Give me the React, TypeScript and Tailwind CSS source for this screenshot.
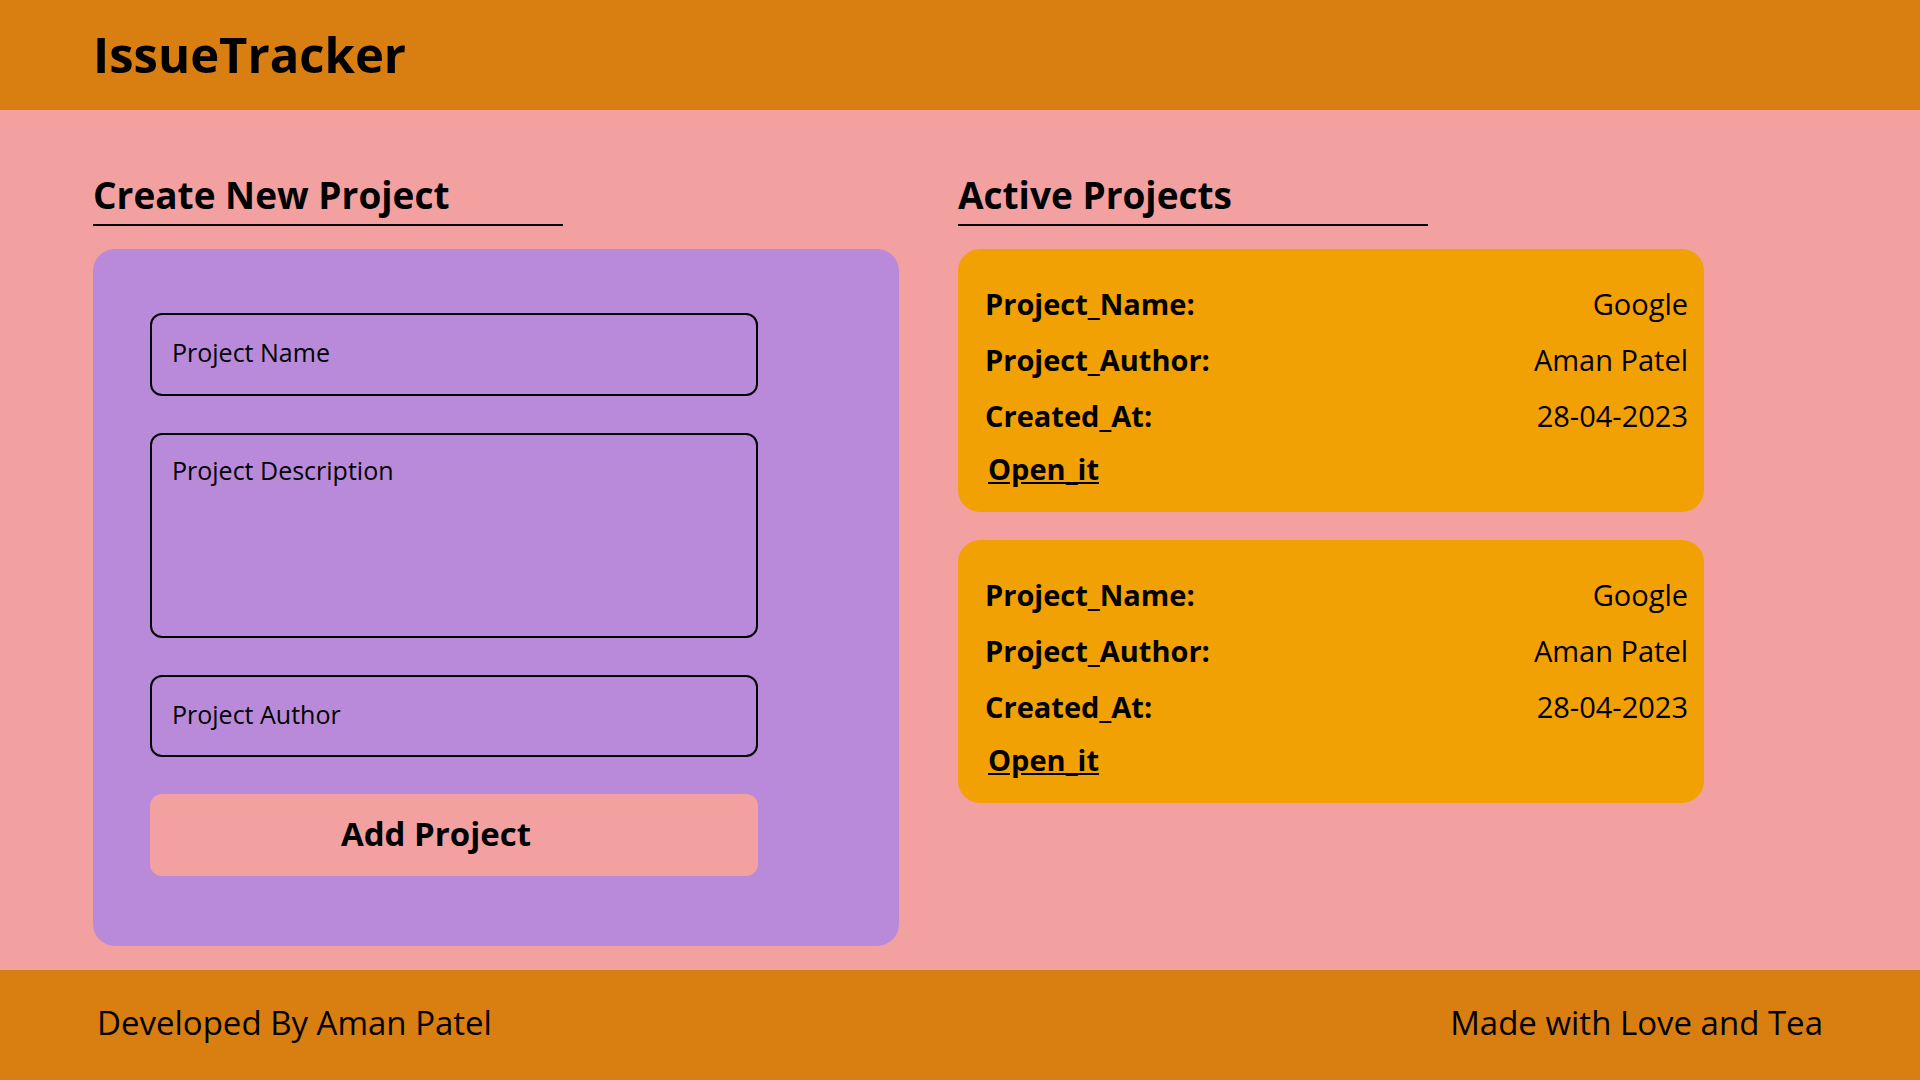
const projects = [
  { name: "Google", author: "Aman Patel", createdAt: "28-04-2023" },
  { name: "Google", author: "Aman Patel", createdAt: "28-04-2023" },
]

function SectionTitle({ title }: { title: string }) {
  return (
    <div className="w-[470px] border-b-2 border-black pb-[6px]">
      <h2 className="text-[37px] font-bold leading-[46px]">{title}</h2>
    </div>
  )
}

function ProjectCard({ name, author, createdAt }: { name: string; author: string; createdAt: string }) {
  return (
    <div className="w-[746px] rounded-[22px] bg-[#f2a104] pl-[27px] pr-[16px] pt-[27px] pb-[15px] text-[29px] leading-[56px]">
      <div className="flex justify-between">
        <span className="font-bold">Project_Name:</span>
        <span>{name}</span>
      </div>
      <div className="flex justify-between">
        <span className="font-bold">Project_Author:</span>
        <span>{author}</span>
      </div>
      <div className="flex justify-between">
        <span className="font-bold">Created_At:</span>
        <span>{createdAt}</span>
      </div>
      <div className="-mt-[3px]">
        <a href="#" className="ml-[3px] font-bold underline">
          Open_it
        </a>
      </div>
    </div>
  )
}

export default function App() {
  return (
    <div className="flex h-screen flex-col bg-[#f3a0a1] text-black" style={{ fontFamily: '"Open Sans", "Noto Sans", sans-serif' }}>
      <header className="flex h-[110px] shrink-0 items-center bg-[#d97e10] px-[93px]">
        <h1 className="text-[49px] font-bold">IssueTracker</h1>
      </header>

      <main className="flex flex-1 gap-[59px] px-[93px] pt-[62px]">
        <section className="w-[806px]">
          <SectionTitle title="Create New Project" />
          <form className="mt-[23px] flex flex-col gap-[37px] rounded-[22px] bg-[#ba8ada] pl-[57px] pt-[64px] pb-[70px]">
            <input
              type="text"
              placeholder="Project Name"
              className="h-[83px] w-[608px] rounded-[12px] border-2 border-black bg-transparent pl-[20px] pb-[5px] text-[25px] outline-none placeholder:text-black"
            />
            <textarea
              placeholder="Project Description"
              className="h-[205px] w-[608px] resize-none rounded-[12px] border-2 border-black bg-transparent pl-[20px] pt-[17px] text-[25px] outline-none placeholder:text-black"
            />
            <input
              type="text"
              placeholder="Project Author"
              className="h-[82px] w-[608px] rounded-[12px] border-2 border-black bg-transparent pl-[20px] pb-[5px] text-[25px] outline-none placeholder:text-black"
            />
            <button type="button" className="h-[82px] w-[608px] rounded-[12px] bg-[#f3a0a1] pr-[36px] pb-[2px] text-[33px] font-bold">
              Add Project
            </button>
          </form>
        </section>

        <section className="w-[746px]">
          <SectionTitle title="Active Projects" />
          <div className="mt-[23px] flex flex-col gap-[28px]">
            {projects.map((p, i) => (
              <ProjectCard key={i} {...p} />
            ))}
          </div>
        </section>
      </main>

      <footer className="flex h-[110px] shrink-0 items-center justify-between bg-[#d97e10] px-[97px] pb-[5px] text-[33px]">
        <span>Developed By Aman Patel</span>
        <span>Made with Love and Tea</span>
      </footer>
    </div>
  )
}
